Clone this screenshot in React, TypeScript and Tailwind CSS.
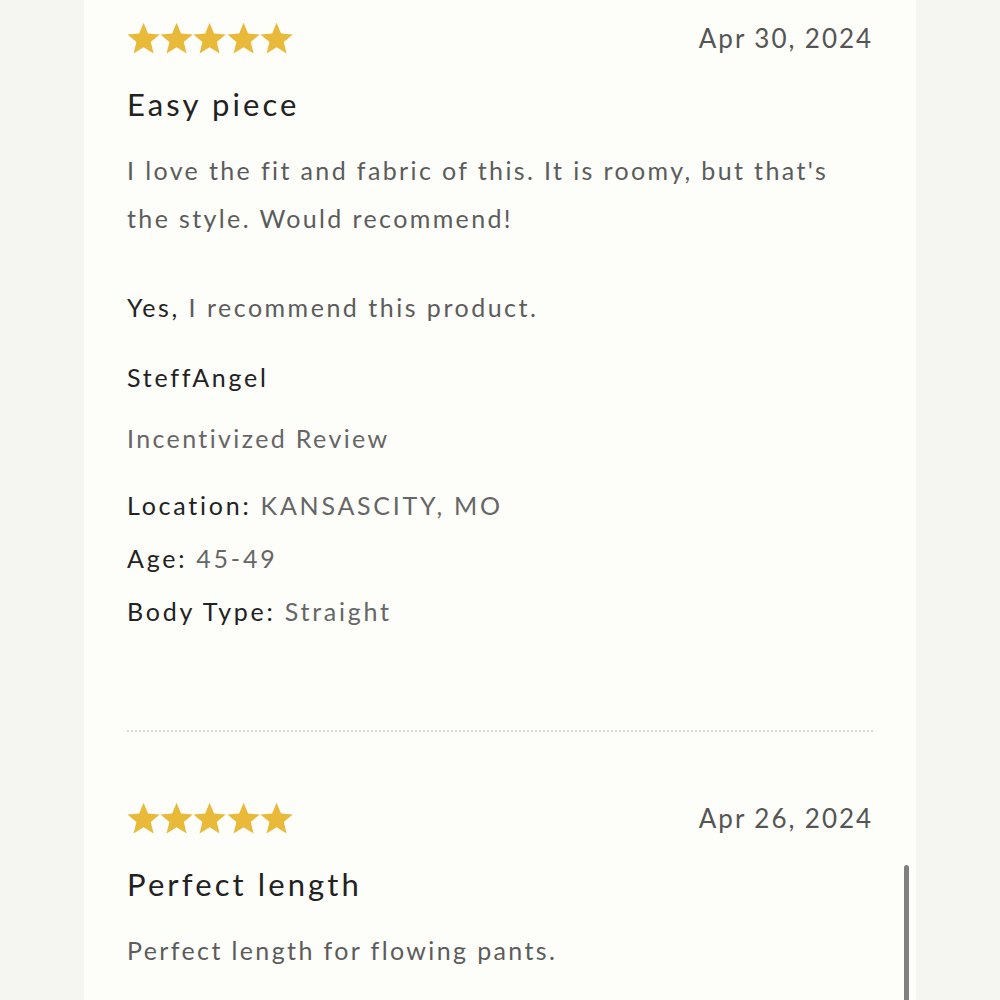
import React from 'react';

type Review = {
  date: string;
  title: string;
  body: string;
  recommend?: boolean;
  author?: string;
  incentivized?: boolean;
  details?: { label: string; value: string }[];
};

const reviews: Review[] = [
  {
    date: 'Apr 30, 2024',
    title: 'Easy piece',
    body: "I love the fit and fabric of this. It is roomy, but that's the style. Would recommend!",
    recommend: true,
    author: 'SteffAngel',
    incentivized: true,
    details: [
      { label: 'Location', value: 'KANSASCITY, MO' },
      { label: 'Age', value: '45-49' },
      { label: 'Body Type', value: 'Straight' },
    ],
  },
  {
    date: 'Apr 26, 2024',
    title: 'Perfect length',
    body: 'Perfect length for flowing pants.',
  },
];

const Star: React.FC = () => (
  <svg viewBox="1.1 1.3 21.8 21.2" className="h-[32px] w-[33.2px]" fill="#e9b93a">
    <path d="M12 1.8l2.95 7.2 7.75.55-5.95 5 1.9 7.55L12 17.95 5.35 22.1l1.9-7.55-5.95-5 7.75-.55z" />
  </svg>
);

const Stars: React.FC = () => (
  <div className="flex">
    {[0, 1, 2, 3, 4].map((i) => (
      <Star key={i} />
    ))}
  </div>
);

const ReviewItem: React.FC<{ review: Review; last?: boolean }> = ({ review, last }) => (
  <div>
    <div className="flex h-[34px] items-center justify-between">
      <Stars />
      <span className="text-[26px] leading-[34px] tracking-[0.075em] text-[#555555]">{review.date}</span>
    </div>
    <h3 className="mt-[29px] text-[31px] leading-[40px] tracking-[0.1em] text-[#222222]">{review.title}</h3>
    <p className="mt-[22px] text-[25px] leading-[48px] tracking-[0.095em] text-[#5c5c5c]">{review.body}</p>
    {review.recommend && (
      <p className="mt-[48px] text-[25px] leading-[34px] tracking-[0.1em] text-[#5c5c5c]">
        <span className="text-[#222222]">Yes,</span> I recommend this product.
      </p>
    )}
    {review.author && (
      <p className="mt-[36px] text-[25px] leading-[34px] tracking-[0.11em] text-[#222222]">{review.author}</p>
    )}
    {review.incentivized && (
      <p className="mt-[27px] text-[25px] leading-[34px] tracking-[0.095em] text-[#666666]">Incentivized Review</p>
    )}
    {review.details && (
      <div className="mt-[33px] flex flex-col gap-[19px]">
        {review.details.map((d) => (
          <p key={d.label} className="text-[25px] leading-[34px] tracking-[0.11em] text-[#666666]">
            <span className="text-[#222222]">{d.label}:</span> {d.value}
          </p>
        ))}
      </div>
    )}
    {!last && <div className="mb-[69px] mt-[102px] border-t-2 border-dotted border-[#d9d9d5]" />}
  </div>
);

export default function App() {
  return (
    <div
      className="relative h-[1000px] w-[1000px] overflow-hidden bg-[#f5f5f1]"
      style={{ fontFamily: 'Lato, "Open Sans", sans-serif' }}
    >
      <div className="ml-[84px] h-full w-[832px] bg-[#fdfdf9] px-[43px] pt-[21px]">
        {reviews.map((r, i) => (
          <ReviewItem key={r.date} review={r} last={i === reviews.length - 1} />
        ))}
      </div>
      {/* scroll indicator */}
      <div className="absolute left-[904px] top-[865px] h-[160px] w-[5px] rounded-full bg-[#808080]" />
    </div>
  );
}
